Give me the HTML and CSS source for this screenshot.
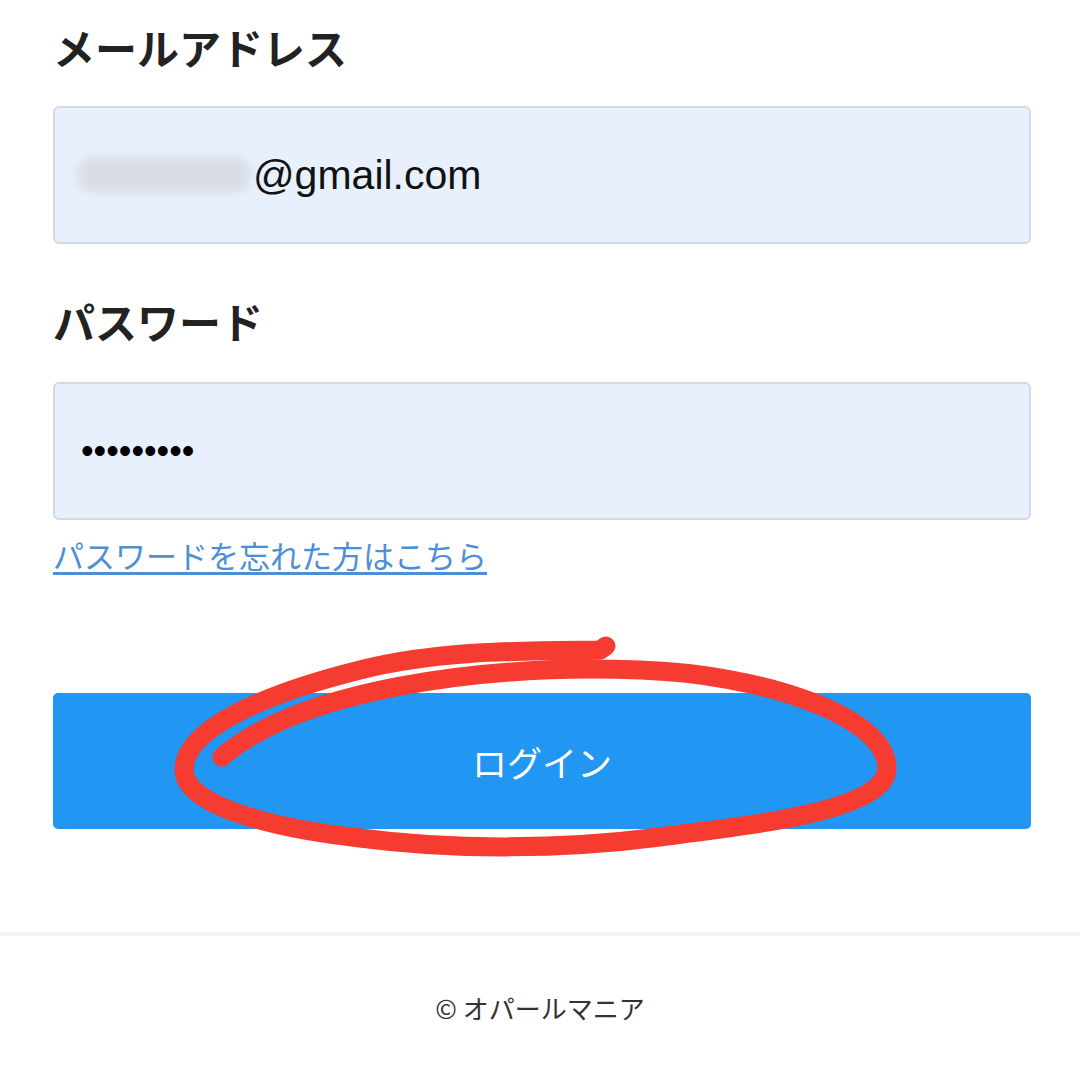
FILE: index.html
```html
<!DOCTYPE html>
<html lang="ja">
<head>
  <meta charset="UTF-8">
  <title>ログイン - オパールマニア</title>
  <meta name="viewport" content="width=device-width, initial-scale=1">
  <link rel="stylesheet" href="styles.css">
</head>
<body>
  <div class="container">
    <form class="login-form">
      <div class="field-label">メールアドレス</div>
      <div class="field-box">
        <span class="blurred"></span><span class="email-text">@gmail.com</span>
      </div>

      <div class="field-label label-pw">パスワード</div>
      <div class="field-box field-pw">
        <span class="dots">•••••••••</span>
      </div>

      <a href="#" class="forgot-link">パスワードを忘れた方はこちら</a>

      <button type="button" class="login-btn">ログイン</button>
    </form>
  </div>

  <footer class="footer">
    <p>© オパールマニア</p>
  </footer>

  <!-- 赤丸の手書きマーク -->
  <svg class="mark" width="1080" height="1080" viewBox="0 0 1080 1080">
    <path d="M 222 757
             C 300 690, 480 664, 640 670
             C 760 674, 885 715, 887 767
             C 889 810, 760 824, 660 837
             C 560 850, 450 850, 360 838
             C 270 828, 184 805, 184 770
             C 184 730, 260 695, 360 670
             C 440 650, 520 651, 600 650
             L 606 646"
          fill="none" stroke="#f63b30" stroke-width="19"
          stroke-linecap="round" stroke-linejoin="round"/>
  </svg>
</body>
</html>
```

FILE: styles.css
```css
:root {
  --primary-color: #2196f3;
  --input-bg: #e8f0fe;
  --input-border: #d3d9e1;
  --link-color: #4d8fd6;
}
* { margin: 0; padding: 0; box-sizing: border-box; }
body {
  font-family: "Noto Sans CJK JP", "Noto Sans", sans-serif;
  background: #fff;
  color: #222;
}
.container {
  padding: 0 49px 0 53px;
}
.login-form {
  display: flex;
  flex-direction: column;
  align-items: flex-start;
}
.field-label {
  font-size: 42px;
  line-height: 50px;
  font-weight: 700;
  color: #222;
  margin-top: 22px;
}
.label-pw {
  margin-top: 52px;
}
.field-box {
  width: 100%;
  height: 138px;
  margin-top: 34px;
  background: var(--input-bg);
  border: 2px solid var(--input-border);
  border-radius: 6px;
  display: flex;
  align-items: center;
  padding-left: 22px;
}
.field-pw {
  margin-top: 36px;
  padding-left: 26px;
}
.blurred {
  display: inline-block;
  width: 174px;
  height: 36px;
  background: #d9dee6;
  border-radius: 18px;
  filter: blur(4px);
}
.email-text {
  font-family: "Liberation Sans", Arial, sans-serif;
  font-size: 41px;
  color: #111;
  margin-left: 2px;
}
.dots {
  font-family: "Liberation Sans", Arial, sans-serif;
  font-size: 36px;
  color: #000;
}
.forgot-link {
  margin-top: 16px;
  font-size: 31px;
  line-height: 37px;
  color: var(--link-color);
  text-decoration: underline;
  text-underline-offset: 4px;
}
.login-btn {
  width: 100%;
  height: 136px;
  margin-top: 120px;
  background: var(--primary-color);
  color: #fff;
  border: none;
  border-radius: 5px;
  font-family: inherit;
  font-size: 35px;
  cursor: pointer;
}
.footer {
  margin-top: 103px;
  border-top: 4px solid #f2f2f2;
  padding-top: 57px;
  text-align: center;
}
.footer p {
  font-size: 26px;
  line-height: 30px;
  color: #333;
}
.mark {
  position: absolute;
  top: 0;
  left: 0;
  pointer-events: none;
}
```
